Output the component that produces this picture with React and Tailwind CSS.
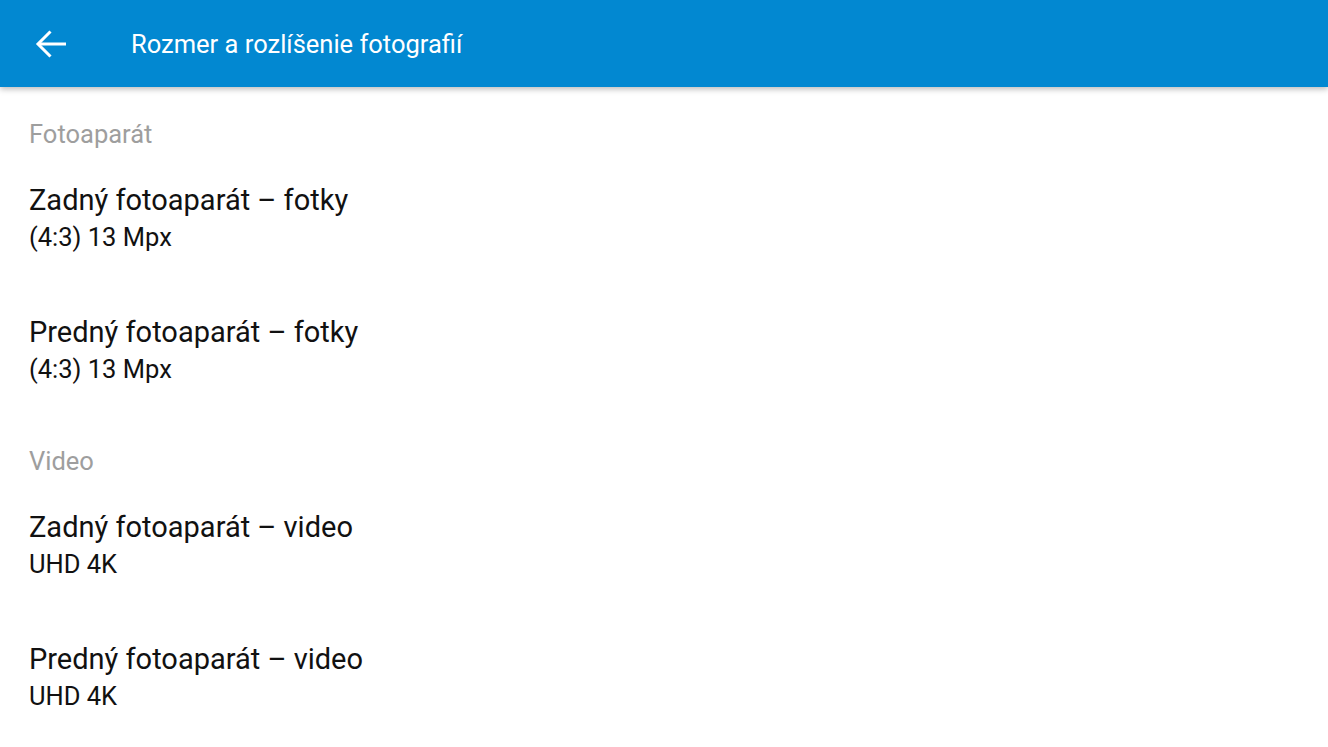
import React from "react";

const sections = [
  {
    title: "Fotoaparát",
    items: [
      { label: "Zadný fotoaparát – fotky", value: "(4:3) 13 Mpx" },
      { label: "Predný fotoaparát – fotky", value: "(4:3) 13 Mpx" },
    ],
  },
  {
    title: "Video",
    items: [
      { label: "Zadný fotoaparát – video", value: "UHD 4K" },
      { label: "Predný fotoaparát – video", value: "UHD 4K" },
    ],
  },
];

function BackArrow() {
  return (
    <svg width="32" height="30" viewBox="0 0 32 30" fill="none" stroke="white" strokeWidth="3" strokeLinecap="butt">
      <path d="M31 15H3" />
      <path d="M15.5 2.5L3 15l12.5 12.5" />
    </svg>
  );
}

export default function App() {
  return (
    <div className="w-[1328px] h-[747px] bg-white overflow-hidden" style={{ fontFamily: "Roboto, 'Noto Sans', sans-serif" }}>
      {/* ── Toolbar ── */}
      <header className="relative z-10 h-[87px] bg-[#0288d1] flex items-center shadow-[0_2px_6px_rgba(0,0,0,0.28)]">
        <button className="w-[131px] h-full flex items-center pl-[35px]">
          <BackArrow />
        </button>
        <h1 className="text-white text-[25.5px] leading-none pt-[3px]">Rozmer a rozlíšenie fotografií</h1>
      </header>

      {/* ── Settings list ── */}
      <main className="pt-[3px]">
        {sections.map((s) => (
          <section key={s.title}>
            <div className="pl-[29px] pt-[26px] pb-[1px] h-[63px] text-[25.5px] leading-[36px] text-[#9e9e9e]">
              {s.title}
            </div>
            {s.items.map((it) => (
              <div key={it.label} className="pl-[29px] pt-[29px] pb-[29px] h-[132px]">
                <div className="text-[29px] leading-[36px] text-[#111111]">{it.label}</div>
                <div className="text-[25.5px] leading-[38px] text-[#111111]">{it.value}</div>
              </div>
            ))}
          </section>
        ))}
      </main>
    </div>
  );
}
